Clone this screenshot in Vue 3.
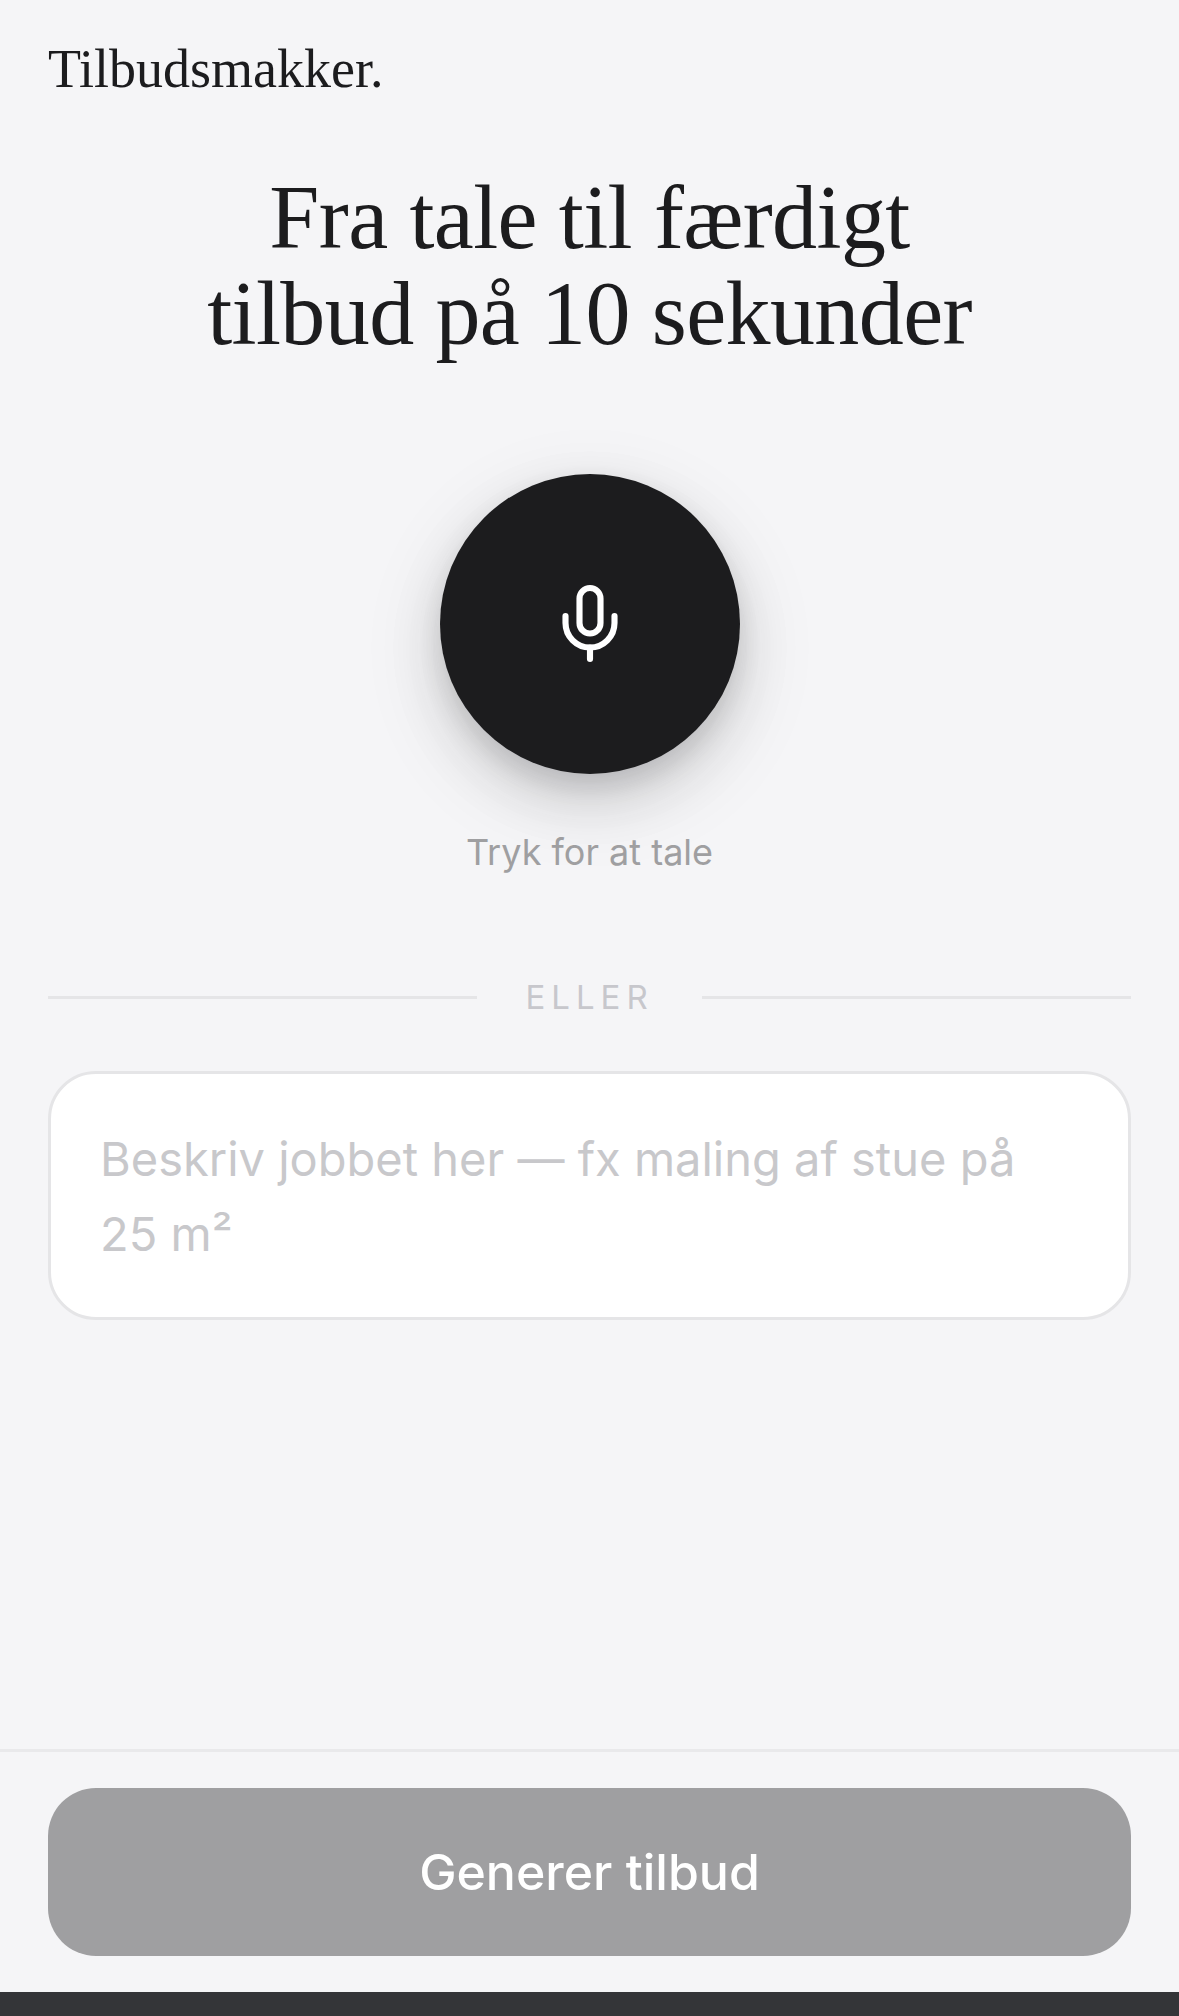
<script setup>
const title = ['Fra tale til færdigt', 'tilbud på 10 sekunder']
</script>

<template>
  <div class="page">
    <header class="logo">Tilbudsmakker.</header>
    <main class="main">
      <h1 class="title">
        <span v-for="line in title" :key="line" class="title-line">{{ line }}</span>
      </h1>
      <section class="voice">
        <button class="mic" type="button" aria-label="Tryk for at tale">
          <svg class="mic-icon" viewBox="0 0 24 24" fill="none" stroke="#fff" stroke-width="1.75" stroke-linecap="round" stroke-linejoin="round">
            <path d="M12 2a3 3 0 0 0-3 3v7a3 3 0 0 0 6 0V5a3 3 0 0 0-3-3Z" />
            <path d="M19 10v2a7 7 0 0 1-14 0v-2" />
            <path d="M12 19v3.3" />
          </svg>
        </button>
        <div class="hint">Tryk for at tale</div>
      </section>
      <div class="divider">
        <span class="rule"></span>
        <span class="or">ELLER</span>
        <span class="rule"></span>
      </div>
      <div class="input">Beskriv jobbet her — fx maling af stue på 25 m²</div>
    </main>
    <footer class="footer">
      <button class="submit" type="button">Generer tilbud</button>
    </footer>
    <div class="bar"></div>
  </div>
</template>

<style>
html, body { margin: 0; background: #f5f5f7; }
</style>

<style scoped>
.page {
  width: 1179px;
  height: 2016px;
  display: flex;
  flex-direction: column;
  overflow: hidden;
  background: #f5f5f7;
  color: #1c1c1e;
  font-family: Inter, "Liberation Sans", sans-serif;
}
.logo {
  padding: 36px 48px 0;
  font-family: "Liberation Serif", serif;
  font-size: 54px;
  line-height: 66px;
  letter-spacing: 0;
}
.main {
  flex: 1;
  display: flex;
  flex-direction: column;
  padding: 0 48px;
}
.title {
  margin: 68px 0 0;
  font-family: "Liberation Serif", serif;
  font-weight: 400;
  font-size: 90px;
  line-height: 96px;
  letter-spacing: -0.6px;
  text-align: center;
}
.title-line { display: block; }
.voice {
  display: flex;
  flex-direction: column;
  align-items: center;
  margin-top: 112px;
}
.mic {
  width: 300px;
  height: 300px;
  padding: 0;
  border: 0;
  border-radius: 50%;
  background: #1c1c1e;
  display: flex;
  align-items: center;
  justify-content: center;
  box-shadow: 0 24px 60px rgba(28, 28, 30, 0.18), 0 12px 24px rgba(28, 28, 30, 0.11), 0 24px 110px rgba(28, 28, 30, 0.05);
}
.mic-icon { width: 84px; height: 84px; display: block; margin-top: -2px; }
.hint {
  margin-top: 54px;
  font-size: 36px;
  line-height: 48px;
  color: #9f9fa1;
  letter-spacing: 0;
}
.divider {
  display: flex;
  align-items: center;
  gap: 48px;
  margin-top: 101px;
}
.rule { flex: 1; height: 3px; background: #e5e5e7; }
.or {
  font-size: 33px;
  line-height: 40px;
  letter-spacing: 6px;
  color: #c7c7cc;
}
.input {
  box-sizing: border-box;
  height: 249px;
  margin-top: 54px;
  padding: 47px 49px;
  border: 3px solid #e5e5e7;
  border-radius: 48px;
  background: #fff;
  font-size: 47px;
  line-height: 75px;
  color: #c8c8cb;
}
.footer {
  padding: 36px 48px;
  border-top: 3px solid #e9e9eb;
}
.submit {
  display: block;
  width: 100%;
  height: 168px;
  border: 0;
  border-radius: 48px;
  background: #9f9fa1;
  color: #fff;
  font-family: inherit;
  font-size: 50px;
  font-weight: 500;
}
.bar { height: 24px; background: #343538; }
</style>
